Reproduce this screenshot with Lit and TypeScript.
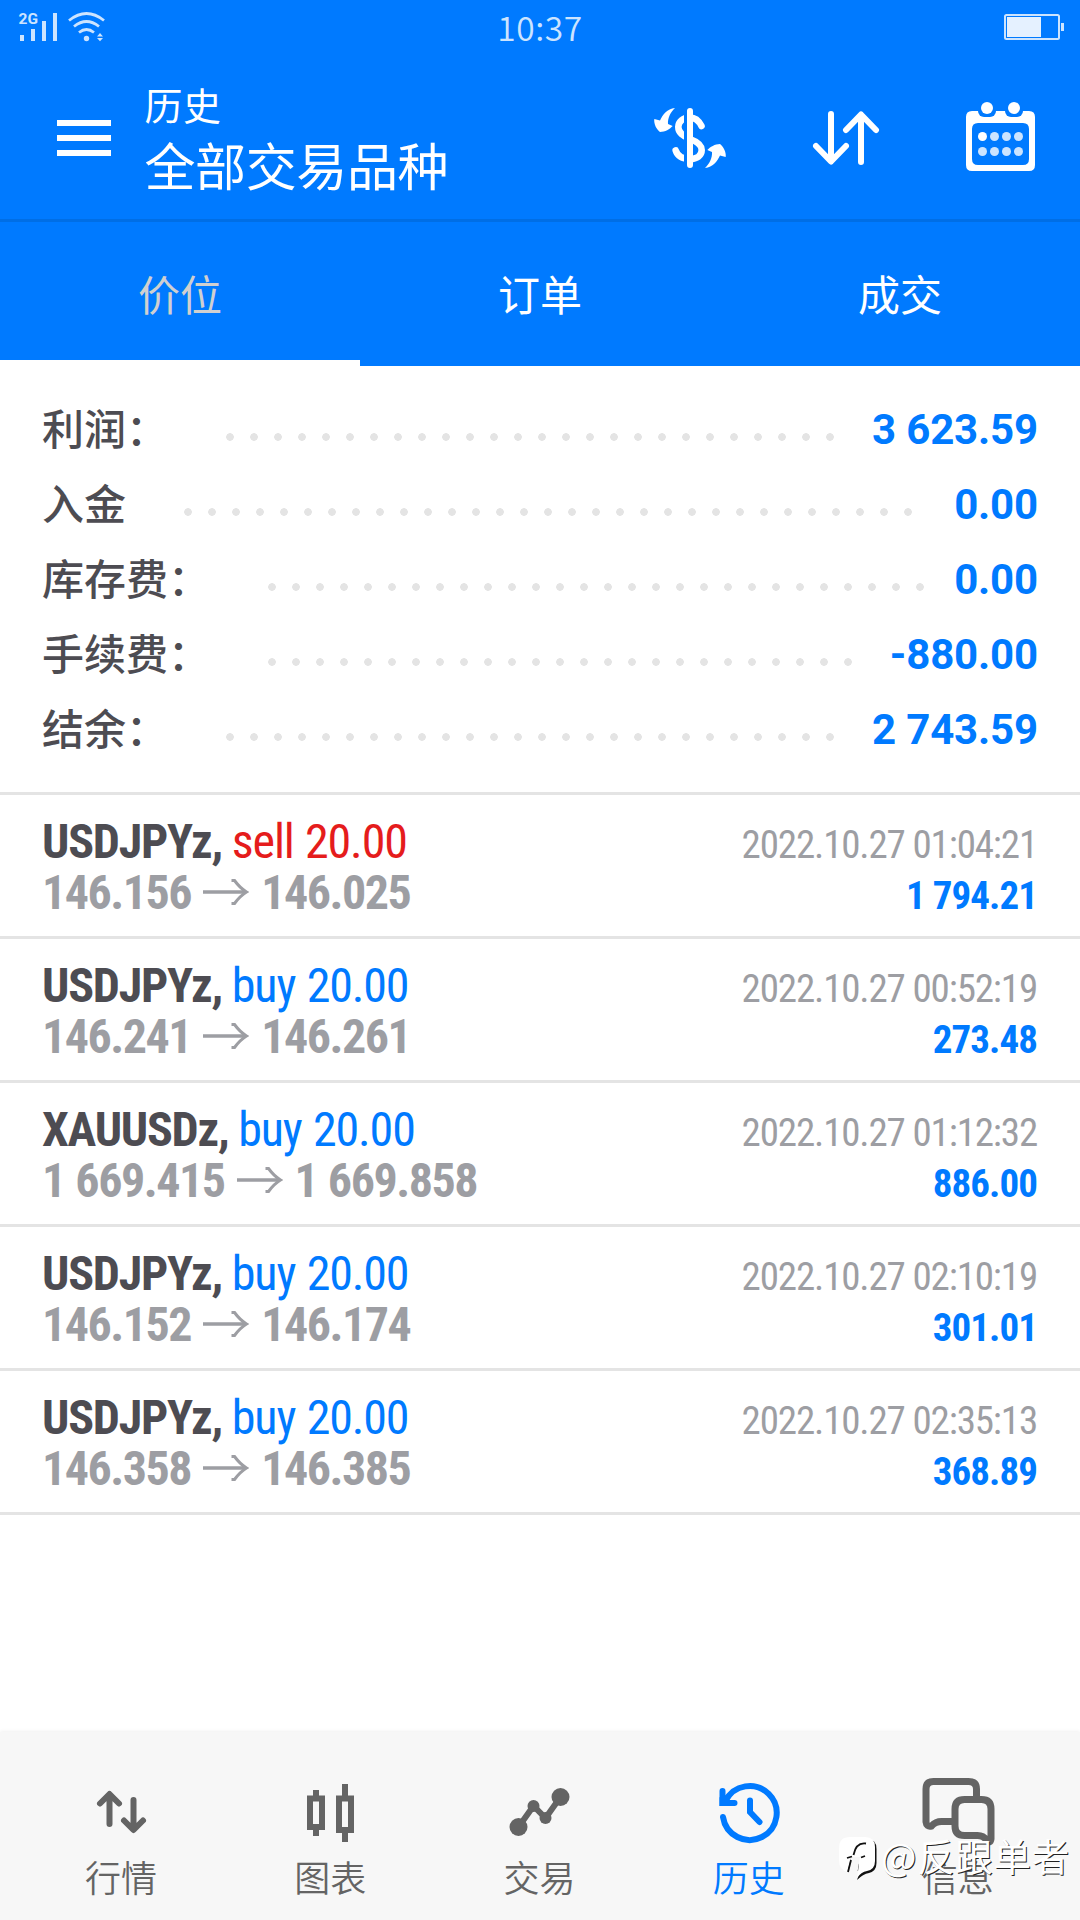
import { LitElement, html, svg, css } from "lit";
import { customElement } from "lit/decorators.js";

interface Total { label: string; value: string; dots: number; }
interface Deal { symbol: string; side: "buy" | "sell"; volume: string; open: string; close: string; time: string; profit: string; }

const TOTALS: Total[] = [
  { label: "利润：", value: "3 623.59", dots: 26 },
  { label: "入金", value: "0.00", dots: 31 },
  { label: "库存费：", value: "0.00", dots: 28 },
  { label: "手续费：", value: "-880.00", dots: 25 },
  { label: "结余：", value: "2 743.59", dots: 26 },
];

const DEALS: Deal[] = [
  { symbol: "USDJPYz,", side: "sell", volume: "20.00", open: "146.156", close: "146.025", time: "2022.10.27 01:04:21", profit: "1 794.21" },
  { symbol: "USDJPYz,", side: "buy", volume: "20.00", open: "146.241", close: "146.261", time: "2022.10.27 00:52:19", profit: "273.48" },
  { symbol: "XAUUSDz,", side: "buy", volume: "20.00", open: "1 669.415", close: "1 669.858", time: "2022.10.27 01:12:32", profit: "886.00" },
  { symbol: "USDJPYz,", side: "buy", volume: "20.00", open: "146.152", close: "146.174", time: "2022.10.27 02:10:19", profit: "301.01" },
  { symbol: "USDJPYz,", side: "buy", volume: "20.00", open: "146.358", close: "146.385", time: "2022.10.27 02:35:13", profit: "368.89" },
];

const NAV = [
  { label: "行情", icon: svg`<path d="M110 1824V1795M100.500 1803.500L110 1794L119.500 1803.500M134 1800V1829M124.500 1820.500L134 1830L143.500 1820.500" stroke-linecap="round" stroke-linejoin="round"/>` },
  { label: "图表", icon: svg`<path d="M316.500 1790v7M316.500 1829v7M345.500 1784v13M345.500 1832v10M310.500 1798.500h12v28.500h-12zM339.500 1798.500h12v31.500h-12z"/>` },
  { label: "交易", icon: svg`<path d="M519 1827L534 1806L546 1818L561 1797"/><g fill="currentColor" stroke="none"><circle cx="519" cy="1827" r="9"/><circle cx="534" cy="1806" r="6"/><circle cx="546" cy="1818" r="6"/><circle cx="561" cy="1797" r="9"/></g>` },
  { label: "历史", icon: svg`<path d="M722.500 1817A27 27 0 1 0 725 1801M722 1791V1803H734M749.500 1800.500V1812L759 1822" stroke-linecap="round"/><path d="M719 1806V1797L729 1806Z" fill="currentColor" stroke="none"/>` },
  { label: "信息", icon: svg`<g stroke-width="7"><path d="M976 1797V1789Q976 1781.500 968 1781.500H933Q925.500 1781.500 925.500 1789V1822Q926 1827 931 1826Q935 1821.500 941 1821.500H953"/><path d="M964 1799.500H981Q990.500 1799.500 990.500 1809V1839Q990 1844 986 1840Q983 1835.500 977 1835.500H964Q954.500 1835.500 954.500 1826V1809Q954.500 1799.500 964 1799.500Z"/></g>` },
];

@customElement("app-root")
export class AppRoot extends LitElement {
  static styles = css`
    :host {
      display: flex; flex-direction: column; position: relative;
      width: 1080px; height: 1920px; overflow: hidden; background: #fff;
      font-family: Roboto, "Noto Sans CJK SC", sans-serif; color: #4d4c52;
    }
    * { box-sizing: border-box; }
    svg { display: block; flex: none; }
    .cjk { font-family: "Noto Sans CJK SC", sans-serif; }
    .status { height: 56px; background: #007aff; color: #cce4ff; display: grid; grid-template-columns: 1fr auto 1fr; align-items: start; }
    .clock { font-size: 33.500px; font-weight: 350; line-height: 40px; padding-top: 7px; letter-spacing: .6px; }
    .battery { justify-self: end; }
    .head { height: 166px; background: #007aff; color: #fff; display: flex; border-bottom: 3px solid #006ee5; }
    .titles { margin-left: 31.500px; padding-top: 22px; flex: 1; font-weight: 400; }
    .title { font-size: 38px; line-height: 52px; letter-spacing: .4px; }
    .subtitle { font-size: 51px; line-height: 68px; letter-spacing: -.4px; }
    .tabs { height: 144px; display: grid; grid-template-columns: repeat(3, 1fr); background: #007aff; color: #fff; }
    .tab { text-align: center; font-size: 42px; padding-top: 5px; line-height: 132px; font-weight: 400; }
    .tab.on { color: #d0d0d0; border-bottom: 6px solid #fff; }
    .totals { height: 429px; padding: 23px 42px 0; border-bottom: 3px solid #e4e4e4; }
    .total { display: flex; height: 75px; align-items: center; }
    .label { font-size: 42px; font-weight: 500; line-height: 75px; }
    .dots { height: 8px; margin: 20px 0 0 50px; background: radial-gradient(circle at 12px 4px, #e4e4e4 3.500px, transparent 4.100px) 0 0 / 24px 8px; }
    .value { margin-left: auto; font-size: 42px; font-weight: 700; line-height: 69px; padding-top: 6px; color: #007aff; letter-spacing: -.15px; }
    .deal { height: 144px; padding: 21px 42px 0; border-bottom: 3px solid #e4e4e4; font-stretch: 75%; font-family: "Roboto Condensed", Roboto, sans-serif; letter-spacing: -1.150px; }
    .line { display: flex; align-items: baseline; height: 51px; line-height: 51px; font-size: 48px; white-space: pre; }
    .symbol { font-weight: 700; letter-spacing: -1.250px; }
    .sell, .buy { word-spacing: 1.500px; }
    .sell { color: #e51c1c; }
    .buy, .profit { color: #007aff; }
    .prices { display: flex; font-weight: 700; color: #9d9ea3; letter-spacing: -1.480px; word-spacing: 1px; }
    .arrow { margin: 12px 12px 0 12px; }
    .time, .profit { margin-left: auto; margin-right: 1px; font-size: 39px; }
    .time { color: #9d9ea3; }
    .profit { font-weight: 700; letter-spacing: -.95px; }
    .nav { margin-top: auto; height: 188px; padding: 0 16.500px; background: #f7f7f7; box-shadow: 0 0 4px #e8e8e8; display: flex; color: #646464; }
    .item { width: 209.200px; display: flex; flex-direction: column; align-items: center; padding-top: 43px; font-weight: 350; font-size: 36px; line-height: 52px; }
    .item svg { fill: none; stroke: currentColor; stroke-width: 6; margin-bottom: -1px; }
    .item.on { color: #007aff; }
    .mark { position: absolute; left: 838px; top: 1830px; display: flex; align-items: center; color: #fff; font-size: 37.500px; line-height: 50px; font-weight: 400; letter-spacing: .7px; text-shadow: 1px 1px 0 #222; }
    .mark span { margin-left: 3px; }
  `;

  private statusBar() {
    return html`<div class="status">
      <svg width="120" height="50" viewBox="0 0 120 50" fill="#cce4ff">
        <text x="18.500" y="24" font-size="15.500" font-weight="700" font-family="Roboto, sans-serif">2G</text>
        <path d="M20 35h4v6h-4zM31 29h4v12h-4zM42 21h4v20h-4zM53 13h4v28h-4z"/>
        <circle cx="86.500" cy="38.500" r="2.700"/>
        <path d="M97 36.500l3-3.500 3 3.500zM97 38h6l-3 3.200z"/>
        <path d="M69 20.500Q86.500 6.500 104 20.500M74 26.500Q86.500 16.500 99 26.500M79 32.500Q86.500 26.500 94 32.500" fill="none" stroke="#cce4ff" stroke-width="2.800"/>
      </svg>
      <div class="clock cjk">10:37</div>
      <svg class="battery" width="80" height="50" viewBox="1000 0 80 50">
        <rect x="1005" y="15" width="54" height="24" rx="1.500" fill="none" stroke="#cce4ff" stroke-width="2"/>
        <path d="M1007 17h34v20h-34z" fill="#e5f1ff"/><path d="M1061 23h3v8h-3z" fill="#cce4ff"/>
      </svg>
    </div>`;
  }

  private header() {
    const tail = "M675 108C667 109 663 114 660 120.500L654.300 119C653.500 124 657 130 660 132C665 132 670 129 672.700 126L668 124C667.500 118 671 111.500 675 108Z";
    return html`<div class="head">
      <svg width="113" height="163" viewBox="0 56 113 163"><path d="M57 120h54v6H57zM57 135h54v6H57zM57 150h54v6H57z" fill="#fff"/></svg>
      <div class="titles cjk"><div class="title">历史</div><div class="subtitle">全部交易品种</div></div>
      <svg width="440" height="163" viewBox="640 56 440 163" fill="none" stroke="#fff" stroke-width="6" stroke-linecap="round" stroke-linejoin="round">
        <g fill="#fff" stroke="none"><path d=${tail}/><path d=${tail} transform="rotate(180 690 138)"/></g>
        <path d="M701.500 126C699 121 694.500 117.500 690 117.500C683 117.500 678.300 121.500 678.300 127C678.300 133 683 136 690 139C698 142 701.700 145 701.700 150C701.700 155.500 697 159 690 159C682 159 677.500 156 675.700 150.500" stroke-width="6.600"/>
        <path d="M684 111h3v55h-3z" fill="#007aff" stroke="none"/>
        <path d="M690 111V165M831 114V161M816 146L831 161.500L846 146M861 162V115M846 130L861 114.500L876 130"/>
        <g stroke="none" fill="#fff">
          <path fill-rule="evenodd" d="M972 111H1029Q1035 111 1035 117V165Q1035 171 1029 171H972Q966 171 966 165V117Q966 111 972 111ZM978 123Q972 123 972 129V159Q972 165 978 165H1023Q1029 165 1029 159V129Q1029 123 1023 123Z"/>
          <g fill="#007aff"><rect x="978" y="99" width="18" height="18" rx="6"/><rect x="1005" y="99" width="18" height="18" rx="6"/></g>
          <circle cx="987" cy="108" r="6"/><circle cx="1014" cy="108" r="6"/>
          <circle cx="982.500" cy="136.500" r="4.500"/>
          <g fill="#cce4ff">${[[994.5, 136.5], [1006.5, 136.5], [1018.5, 136.5], [982.5, 151.5], [994.5, 151.5], [1006.5, 151.5], [1018.5, 151.5]].map(([x, y]) => svg`<circle cx=${x} cy=${y} r="4.500"/>`)}</g>
        </g>
      </svg>
    </div>`;
  }

  private deal(d: Deal) {
    return html`<div class="deal">
      <div class="line"><span class="symbol">${d.symbol} </span><span class=${d.side}>${d.side} ${d.volume}</span><span class="time">${d.time}</span></div>
      <div class="line"><span class="prices">${d.open}<svg class="arrow" width="46" height="26" viewBox="0 0 46 26" fill="none" stroke="#9d9ea3" stroke-width="3.500"><path d="M0 13H43"/><path d="M28.500 1.500H31.500Q37 9 43.500 13Q37 17 31.500 24.500H28.500" stroke-width="3"/></svg>${d.close}</span><span class="profit">${d.profit}</span></div>
    </div>`;
  }

  render() {
    return html`${this.statusBar()}${this.header()}
      <div class="tabs cjk"><div class="tab on">价位</div><div class="tab">订单</div><div class="tab">成交</div></div>
      <div class="totals">${TOTALS.map(t => html`<div class="total"><span class="label cjk">${t.label}</span><span class="dots" style="width:${t.dots * 24}px"></span><span class="value">${t.value}</span></div>`)}</div>
      ${DEALS.map(d => this.deal(d))}
      <div class="nav cjk">${NAV.map((n, i) => html`<div class="item ${n.label === "历史" ? "on" : ""}"><svg width="80" height="76" viewBox="${81.5 + i * 209} 1775 80 76">${n.icon}</svg>${n.label}</div>`)}</div>
      <div class="mark cjk">
        <svg width="40" height="50" viewBox="838 1834 40 50">
          <path d="M851 1843H867Q876.500 1843 876.500 1853V1867Q876.500 1875 869 1877Q863 1878 857 1884L860 1875H848Q840 1872 840 1865V1853Z" fill="#111"/>
          <path d="M850 1841H865Q875 1841 875 1851V1865Q875 1873.500 867 1875Q861 1876 857 1882L859 1868L851 1862L847.500 1876Q839 1874 839 1864V1852Q839 1841 850 1841Z" fill="#fff"/>
          <path d="M848 1876L851 1861L860 1861L856.500 1882Z" fill="#f7f7f7"/>
          <path d="M866 1847.500Q856 1846 853.500 1859M847 1862L852 1860.500M851 1864L848 1876M861 1861.500L865 1860" fill="none" stroke="#111" stroke-width="1.800"/>
        </svg><span>@反跟单者</span>
      </div>`;
  }
}
